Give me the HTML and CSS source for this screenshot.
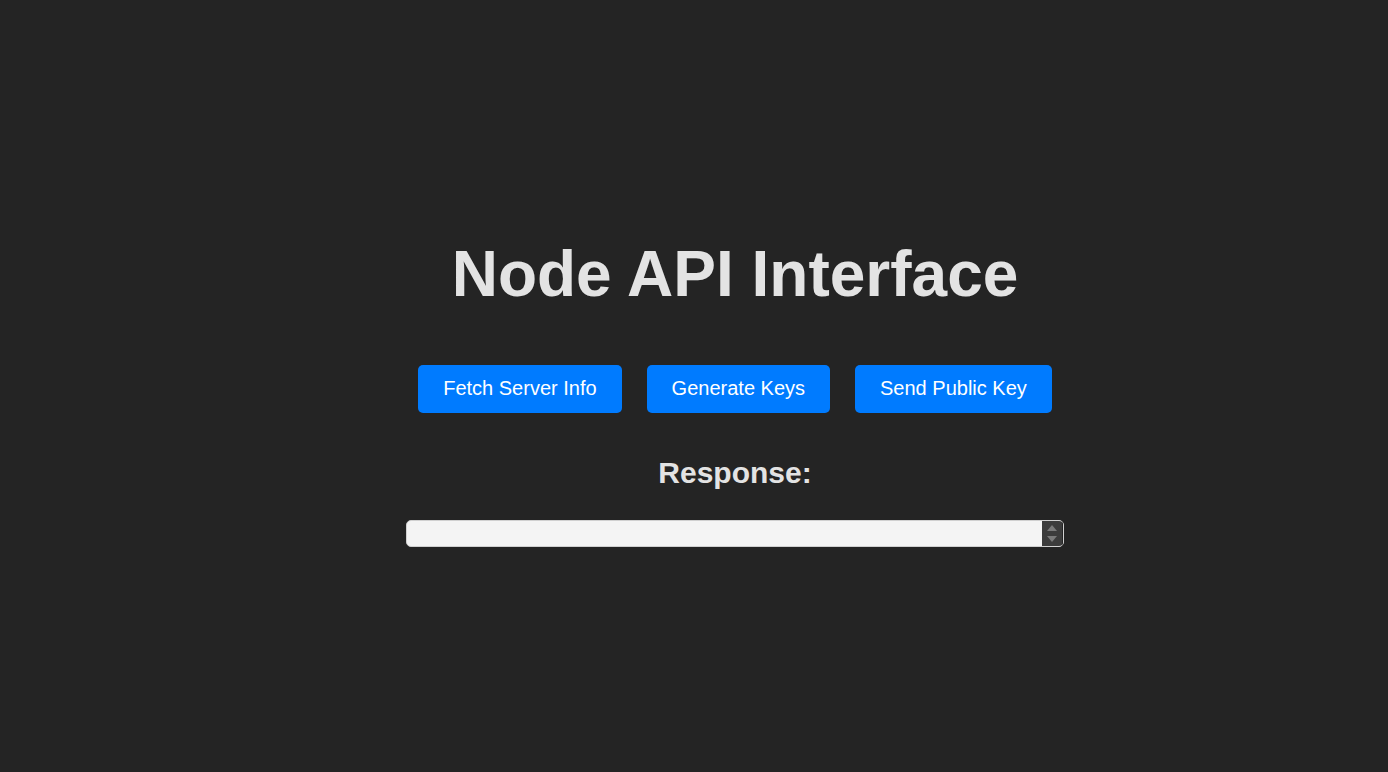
FILE: index.html
```html
<!DOCTYPE html>
<html lang="en">
<head>
<meta charset="utf-8">
<title>Node API Interface</title>
<link rel="stylesheet" href="styles.css">
</head>
<body>
<main class="page">
  <h1 class="title">Node API Interface</h1>
  <div class="actions">
    <button class="btn">Fetch Server Info</button>
    <button class="btn">Generate Keys</button>
    <button class="btn">Send Public Key</button>
  </div>
  <h2 class="subtitle">Response:</h2>
  <div class="response">
    <pre class="response-text"></pre>
    <div class="scrollbar">
      <svg width="10" height="6" viewBox="0 0 10 6"><path d="M0 6 L5 0 L10 6 Z" fill="#7a7a7a"/></svg>
      <svg width="10" height="6" viewBox="0 0 10 6"><path d="M0 0 L5 6 L10 0 Z" fill="#7a7a7a"/></svg>
    </div>
  </div>
</main>
</body>
</html>
```

FILE: styles.css
```css
html, body {
  margin: 0;
  height: 100%;
}
body {
  background: #242424;
  font-family: "Liberation Sans", Arial, sans-serif;
  color: #e3e3e3;
}
.page {
  display: flex;
  flex-direction: column;
  align-items: center;
  padding-top: 237px;
  padding-left: 82px;
}
.title {
  margin: 0;
  font-size: 64px;
  line-height: 74px;
  font-weight: bold;
  color: #e3e3e3;
}
.actions {
  display: flex;
  gap: 25px;
  margin-top: 54px;
}
.btn {
  background: #007bff;
  color: #ffffff;
  border: none;
  border-radius: 5px;
  font-family: "Liberation Sans", Arial, sans-serif;
  font-size: 20px;
  line-height: 23px;
  padding: 12px 25px 13px;
  cursor: pointer;
}
.subtitle {
  margin: 43px 0 0;
  font-size: 30px;
  line-height: 34px;
  font-weight: bold;
  color: #e3e3e3;
}
.response {
  margin-top: 30px;
  width: 658px;
  height: 27px;
  box-sizing: border-box;
  background: #f4f4f4;
  border: 1px solid #d0d0d0;
  border-radius: 5px;
  display: flex;
  overflow: hidden;
}
.response-text {
  flex: 1;
  margin: 0;
}
.scrollbar {
  width: 20px;
  background: #3c3c3c;
  display: flex;
  flex-direction: column;
  align-items: center;
  justify-content: center;
  gap: 5px;
  border-right: 1px solid #242424;
}
```
